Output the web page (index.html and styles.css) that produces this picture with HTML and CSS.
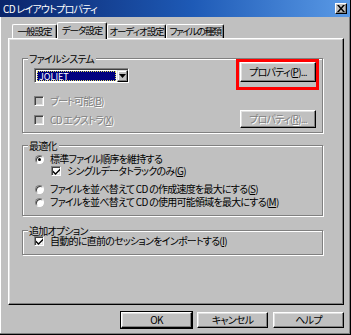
FILE: index.html
```html
<!DOCTYPE html>
<html lang="ja">

<head>
  <meta charset="UTF-8" />
  <title>CD レイアウトプロパティ</title>
  <link rel="stylesheet" href="styles.css">
</head>

<body>
  <div class="window">
    <div class="titlebar">
      <span class="title">CD レイアウトプロパティ</span>
      <span class="close">
        <svg width="8" height="7" viewBox="0 0 8 7"><path d="M0 0h2l2 2.5l2-2.5h2l-3 3.5l3 3.5h-2l-2-2.5l-2 2.5h-2l3-3.5z" fill="#000"/></svg>
      </span>
    </div>

    <div class="tabs">
      <div class="tab t1">一般設定</div>
      <div class="tab t2 active">データ設定</div>
      <div class="tab t3">オーディオ設定</div>
      <div class="tab t4">ファイルの種類</div>
    </div>

    <div class="panel">
      <!-- file system -->
      <div class="group g1">
        <span class="legend">ファイルシステム</span>
        <div class="col-left">
          <div class="combo">
            <span class="combo-text"><span class="focus">JOLIET</span></span>
            <span class="combo-btn">
              <svg width="7" height="4" viewBox="0 0 7 4"><path d="M0 0h7l-3.5 4z" fill="#000"/></svg>
            </span>
          </div>
          <div class="row cb-row1 disabled"><span class="check"></span><span>ブート可能(<u>B</u>)</span></div>
          <div class="row cb-row2 disabled"><span class="check"></span><span>CD エクストラ(<u>X</u>)</span></div>
        </div>
        <div class="col-right">
          <div class="hl"><button class="btn">プロパティ(<u>P</u>)...</button></div>
          <button class="btn btn-r disabled">プロパティ(<u>R</u>)...</button>
        </div>
      </div>

      <!-- optimize -->
      <div class="group g2">
        <span class="legend">最適化</span>
        <div class="row r1"><span class="radio on"></span><span>標準ファイル順序を維持する</span></div>
        <div class="row r2"><span class="check checked"><svg width="7" height="7" viewBox="0 0 7 7"><path d="M0 2.5l2.5 2.5l4.5-4.5v2l-4.5 4.5l-2.5-2.5z" fill="#000"/></svg></span><span>シングルデータトラックのみ(<u>G</u>)</span></div>
        <div class="row r3"><span class="radio"></span><span>ファイルを並べ替えて CD の作成速度を最大にする(<u>S</u>)</span></div>
        <div class="row r4"><span class="radio"></span><span>ファイルを並べ替えて CD の使用可能領域を最大にする(<u>M</u>)</span></div>
      </div>

      <!-- extra -->
      <div class="group g3">
        <span class="legend">追加オプション</span>
        <div class="row"><span class="check checked"><svg width="7" height="7" viewBox="0 0 7 7"><path d="M0 2.5l2.5 2.5l4.5-4.5v2l-4.5 4.5l-2.5-2.5z" fill="#000"/></svg></span><span>自動的に直前のセッションをインポートする(<u>I</u>)</span></div>
      </div>
    </div>

    <div class="buttons">
      <button class="btn big default">OK</button>
      <button class="btn big">キャンセル</button>
      <button class="btn big">ヘルプ</button>
    </div>
  </div>
</body>

</html>
```

FILE: styles.css
```css
body {
  margin: 0;
  font-family: "Noto Sans CJK JP", "Noto Sans", sans-serif;
  font-size: 10px;
  line-height: 12px;
  letter-spacing: -0.75px;
  font-feature-settings: "palt";
  color: #000;
}

.window {
  width: 351px;
  height: 335px;
  box-sizing: border-box;
  background: #c0c0c0;
  border-right: 1px solid #000;
  border-bottom: 1px solid #000;
  box-shadow: inset -1px -1px 0 #808080, inset 1px 0 0 #fff;
  display: flex;
  flex-direction: column;
}

.titlebar {
  height: 17px;
  display: flex;
  align-items: center;
  justify-content: space-between;
  padding: 0 3px 0 3px;
  background: linear-gradient(to right, #0a246a, #1e5ab6 55%, #5a9ae6);
  color: #fff;
}

.close {
  width: 12px;
  height: 11px;
  box-sizing: border-box;
  background: #c0c0c0;
  border: 1px solid;
  border-color: #fff #000 #000 #fff;
  box-shadow: inset -1px -1px 0 #808080;
  display: flex;
  align-items: center;
  justify-content: center;
}

.tabs {
  height: 16px;
  margin-top: 5px;
  padding-left: 12px;
  display: flex;
  align-items: flex-end;
}

.tab {
  height: 14px;
  box-sizing: border-box;
  border-top: 1px solid #fff;
  border-left: 1px solid #fff;
  border-right: 1px solid #000;
  border-radius: 2px 2px 0 0;
  box-shadow: inset -1px 0 0 #808080;
  text-align: center;
  font-size: 9.5px;
  letter-spacing: -1px;
  line-height: 13px;
  white-space: nowrap;
  background: #c0c0c0;
}

.t1 { width: 45px; }
.t2 { width: 50px; }
.t3 { width: 59px; }
.t4 { width: 58px; letter-spacing: -1.4px; }

.tab.active {
  height: 17px;
  margin-bottom: -1px;
  position: relative;
  z-index: 1;
  line-height: 15px;
}

.panel {
  height: 267px;
  margin: 0 6px 0 8px;
  box-sizing: border-box;
  border: 1px solid;
  border-color: #fff #000 #000 #fff;
  box-shadow: inset -1px -1px 0 #808080, inset 1px 1px 0 #dfdfdf;
  padding: 19px 0 0 13px;
}

.group {
  position: relative;
  width: 301px;
  box-sizing: border-box;
  border: 1px solid #808080;
  box-shadow: 1px 1px 0 #fff, inset 1px 1px 0 #fff;
}

.legend {
  position: absolute;
  top: -6px;
  left: 5px;
  padding: 0 2px 0 1px;
  line-height: 11px;
  background: #c0c0c0;
}

.g1 {
  height: 75px;
  display: flex;
  justify-content: space-between;
  padding: 3px 6px 0 11px;
}

.g2 {
  height: 71px;
  margin-top: 12px;
  padding: 7px 0 0 12px;
}

.g3 {
  height: 25px;
  margin-top: 14px;
  padding: 4px 0 0 11px;
}

.col-left {
  display: flex;
  flex-direction: column;
}

.col-right {
  display: flex;
  flex-direction: column;
}

.combo {
  width: 95px;
  height: 15px;
  margin-top: 6px;
  box-sizing: border-box;
  border: 1px solid;
  border-color: #808080 #fff #fff #808080;
  box-shadow: inset 1px 1px 0 #404040;
  background: #fff;
  display: flex;
  padding: 1px 0 0 1px;
}

.combo-text {
  flex: 1;
  padding: 1px;
  line-height: 9px;
}

.focus {
  display: block;
  height: 100%;
  box-sizing: border-box;
  background: #000080;
  color: #fff;
  border: 1px dotted #e0e060;
  padding-left: 1px;
  font-size: 9px;
  letter-spacing: 0;
}

.combo-btn {
  width: 11px;
  box-sizing: border-box;
  background: #c0c0c0;
  border: 1px solid;
  border-color: #dfdfdf #000 #000 #dfdfdf;
  box-shadow: inset -1px -1px 0 #808080, inset 1px 1px 0 #fff;
  display: flex;
  align-items: center;
  justify-content: center;
}

.row {
  display: flex;
  align-items: center;
  height: 12px;
  white-space: nowrap;
}

.row .check,
.row .radio {
  margin-right: 6px;
}

.cb-row1 { margin-top: 12px; }
.cb-row2 { margin-top: 7px; }

.disabled {
  color: #808080;
  text-shadow: 1px 1px 0 #fff;
}

.check {
  width: 10px;
  height: 10px;
  flex-shrink: 0;
  box-sizing: border-box;
  border: 1px solid;
  border-color: #808080 #fff #fff #808080;
  box-shadow: inset 1px 1px 0 #404040, inset -1px -1px 0 #dfdfdf;
  background: #fff;
  display: flex;
  align-items: center;
  justify-content: center;
}

.disabled .check {
  background: #c0c0c0;
}

.radio {
  width: 9px;
  height: 9px;
  flex-shrink: 0;
  box-sizing: border-box;
  border-radius: 50%;
  border: 1px solid;
  border-color: #808080 #fff #fff #808080;
  box-shadow: inset 1px 1px 0 #404040;
  background: #fff;
  display: flex;
  align-items: center;
  justify-content: center;
}

.radio.on::after {
  content: "";
  width: 3px;
  height: 3px;
  border-radius: 50%;
  background: #000;
}

.r2 { margin-top: 0; padding-left: 16px; }
.r3 { margin-top: 6px; }
.r4 { margin-top: 1px; }

.btn {
  font: inherit;
  letter-spacing: inherit;
  font-feature-settings: "palt";
  color: #000;
  width: 76px;
  height: 20px;
  padding: 0;
  box-sizing: border-box;
  background: #c0c0c0;
  border: 1px solid;
  border-color: #fff #000 #000 #fff;
  box-shadow: inset -1px -1px 0 #808080, inset 1px 1px 0 #dfdfdf;
}

.btn-r {
  height: 18px;
  margin-top: 28px;
}

.btn.disabled {
  color: #808080;
}

.hl {
  position: relative;
  display: flex;
}

.hl::after {
  content: "";
  position: absolute;
  top: -3px;
  left: -4px;
  right: -3px;
  bottom: -8px;
  border: 3px solid #f00;
}

.buttons {
  display: flex;
  justify-content: flex-end;
  gap: 5px;
  margin-top: 7px;
  padding-right: 6px;
}

.btn.big {
  width: 71px;
  height: 16px;
  line-height: 12px;
}

.btn.default {
  outline: 1px solid #000;
  outline-offset: 0;
}
```
